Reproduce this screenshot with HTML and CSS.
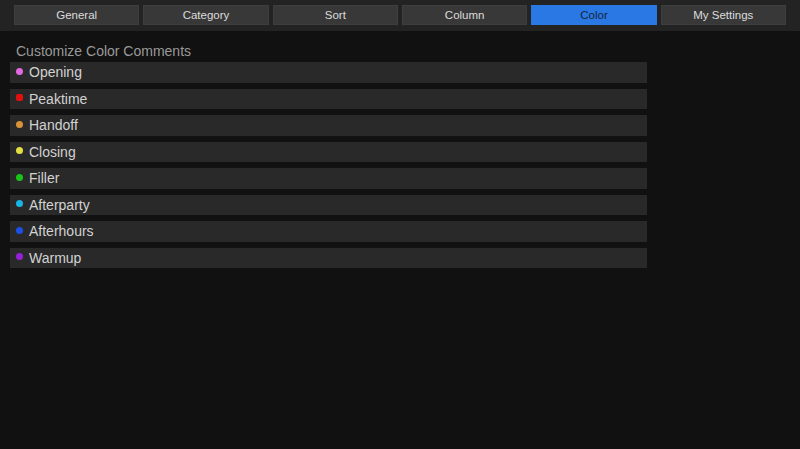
FILE: index.html
```html
<!DOCTYPE html>
<html>
<head>
<meta charset="utf-8">
<link rel="stylesheet" href="styles.css">
</head>
<body>
<div class="topbar">
  <div class="tab">General</div>
  <div class="tab">Category</div>
  <div class="tab">Sort</div>
  <div class="tab">Column</div>
  <div class="tab active">Color</div>
  <div class="tab">My Settings</div>
</div>
<div class="content">
  <div class="heading">Customize Color Comments</div>
  <div class="list">
    <div class="row"><span class="dot c-opening"></span>Opening</div>
    <div class="row"><span class="dot c-peak"></span>Peaktime</div>
    <div class="row"><span class="dot c-handoff"></span>Handoff</div>
    <div class="row"><span class="dot c-closing"></span>Closing</div>
    <div class="row"><span class="dot c-filler"></span>Filler</div>
    <div class="row"><span class="dot c-afterparty"></span>Afterparty</div>
    <div class="row"><span class="dot c-afterhours"></span>Afterhours</div>
    <div class="row"><span class="dot c-warmup"></span>Warmup</div>
  </div>
</div>
</body>
</html>
```
FILE: styles.css
```css
html, body {
  margin: 0;
  padding: 0;
  background: #111111;
  font-family: "Liberation Sans", Arial, sans-serif;
  height: 100%;
  overflow: hidden;
}
.topbar {
  height: 31px;
  background: #232323;
  box-sizing: border-box;
  padding: 5px 14px 0 14px;
  display: flex;
  gap: 4px;
}
.tab {
  flex: 1;
  height: 20px;
  background: #383838;
  color: #dcdcdc;
  font-size: 11.5px;
  display: flex;
  align-items: center;
  justify-content: center;
  box-shadow: inset 0 0 0 1px #3e3e3e;
}
.tab.active {
  background: #2a78e4;
  color: #16263c;
  box-shadow: none;
}
.content {
  padding: 11px 0 0 10px;
  width: 637px;
}
.heading {
  color: #9a9a9a;
  font-size: 14px;
  padding-left: 6px;
  height: 20px;
  line-height: 18px;
}
.list {
  display: flex;
  flex-direction: column;
  gap: 6px;
}
.row {
  height: 20.5px;
  background: #292929;
  color: #d2d2d2;
  font-size: 14px;
  display: flex;
  align-items: center;
  padding-left: 6px;
}
.dot {
  width: 7px;
  height: 7px;
  border-radius: 50%;
  margin-right: 6px;
  margin-top: -2px;
}
.c-opening { background: #e468e0; }
.c-peak { background: #e01010; border-radius: 2px; }
.c-handoff { background: #d89238; }
.c-closing { background: #e2e040; }
.c-filler { background: #18c418; }
.c-afterparty { background: #18b4e8; }
.c-afterhours { background: #1c50e8; }
.c-warmup { background: #9420d8; }
```
